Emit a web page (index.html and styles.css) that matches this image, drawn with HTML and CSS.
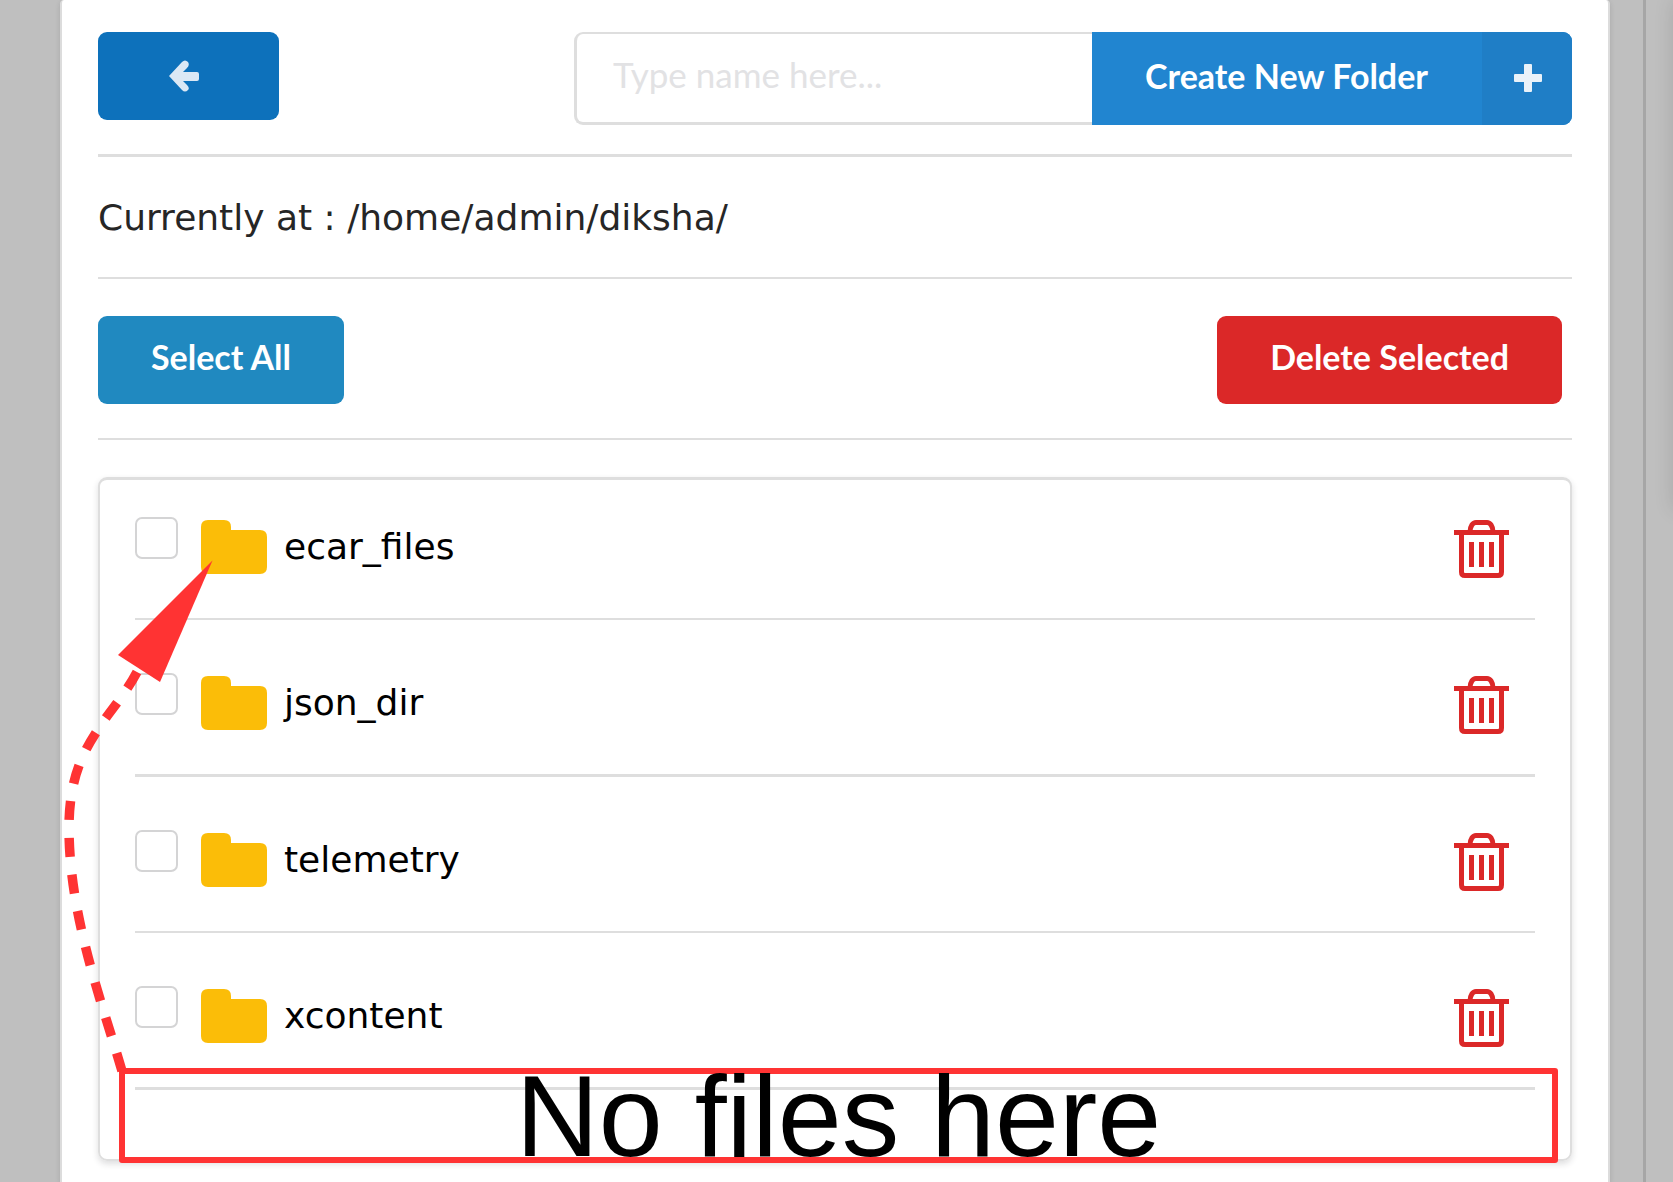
FILE: index.html
```
<!DOCTYPE html>
<html lang="en">
<head>
<meta charset="utf-8">
<title>File manager</title>
<link rel="stylesheet" href="styles.css">
</head>
<body>
<svg class="sprites" aria-hidden="true">
  <symbol id="folder" viewBox="0 0 67 61">
    <path fill="#fbbd08" d="M1 10Q1 3 8 3H24Q31 3 31 10V13H60Q67 13 67 20V50Q67 57 60 57H8Q1 57 1 50Z"/>
  </symbol>
  <symbol id="trash" viewBox="0 0 58 61">
    <g fill="none" stroke="#db2828" stroke-width="5">
      <path d="M19 15C19 9 22 5.500 25 5.500H36C39 5.500 42 9 42 15"/>
      <path d="M3 15.500H58"/>
      <path d="M10.500 16V55Q10.500 58.500 14 58.500H47Q50.500 58.500 50.500 55V16"/>
      <path d="M20.500 25V50M30.500 25V50M40.500 25V50"/>
    </g>
  </symbol>
</svg>
<div class="page">
  <main class="panel">
    <header class="toolbar">
      <button class="btn btn-back" type="button" aria-label="Back">
        <svg class="icon-arrow" viewBox="0 0 30 32"><path fill="#dbe8f5" d="M0 16L13 2Q16 -1 19 2Q21 5 18 8L14 12H28Q30 12 30 14V19Q30 21 28 21H14L18 25Q21 28 19 30Q16 33 13 30Z"/></svg>
      </button>
      <form class="create">
        <input class="create-name" type="text" placeholder="Type name here..." aria-label="Folder name">
        <button class="create-btn" type="button">
          <span class="create-label">Create New Folder</span>
          <span class="create-plus"><svg class="icon-plus" viewBox="0 0 28 28"><path fill="#e9f2f9" d="M10 1Q10 0 11 0H17Q18 0 18 1V10H27Q28 10 28 11V17Q28 18 27 18H18V27Q18 28 17 28H11Q10 28 10 27V18H1Q0 18 0 17V11Q0 10 1 10H10Z"/></svg></span>
        </button>
      </form>
    </header>
    <p class="location">Currently at : /home/admin/diksha/</p>
    <div class="actions">
      <button class="btn btn-select" type="button">Select All</button>
      <button class="btn btn-delete" type="button">Delete Selected</button>
    </div>
    <section class="card">
      <ul class="files">
        <li class="file">
          <input class="check" type="checkbox" id="f1">
          <svg class="icon-folder"><use href="#folder"/></svg>
          <label class="file-name" for="f1">ecar_files</label>
          <button class="trash" type="button" aria-label="Delete ecar_files"><svg class="icon-trash"><use href="#trash"/></svg></button>
        </li>
        <li class="file">
          <input class="check" type="checkbox" id="f2">
          <svg class="icon-folder"><use href="#folder"/></svg>
          <label class="file-name" for="f2">json_dir</label>
          <button class="trash" type="button" aria-label="Delete json_dir"><svg class="icon-trash"><use href="#trash"/></svg></button>
        </li>
        <li class="file">
          <input class="check" type="checkbox" id="f3">
          <svg class="icon-folder"><use href="#folder"/></svg>
          <label class="file-name" for="f3">telemetry</label>
          <button class="trash" type="button" aria-label="Delete telemetry"><svg class="icon-trash"><use href="#trash"/></svg></button>
        </li>
        <li class="file">
          <input class="check" type="checkbox" id="f4">
          <svg class="icon-folder"><use href="#folder"/></svg>
          <label class="file-name" for="f4">xcontent</label>
          <button class="trash" type="button" aria-label="Delete xcontent"><svg class="icon-trash"><use href="#trash"/></svg></button>
        </li>
      </ul>
      <div class="note">No files here</div>
      <svg class="pointer" viewBox="60 550 160 530" aria-hidden="true">
        <path d="M122 1071C104 1008 69 918 69 828C69 780 82 754 97 731C110 710 124 697 138 670" fill="none" stroke="#f33" stroke-width="9.500" stroke-dasharray="19 17.800"/>
        <path d="M212.500 560.500L118 655L160 682Z" fill="#f33"/>
      </svg>
    </section>
  </main>
</div>
<div class="gutter"></div>
</body>
</html>
```
FILE: styles.css
```
* {
  box-sizing: border-box;
}

body {
  margin: 0;
  min-height: 100vh;
  display: flex;
  background: #bfbfbf;
  color: #262626;
  font-family: "DejaVu Sans", sans-serif;
  font-size: 36px;
}

button,
input {
  margin: 0;
  border: 0;
  font-family: Lato, sans-serif;
  font-size: 34px;
}

.sprites {
  position: absolute;
  width: 0;
  height: 0;
}

.page {
  flex: 1;
  display: flex;
  padding: 0 33px 0 60px;
  border-right: 3px solid #a6a6a6;
}

.panel {
  flex: 1;
  min-width: 0;
  padding: 32px 36px 20px;
  background: #fff;
  border: solid #dcdcdc;
  border-width: 0 2px;
  border-radius: 4px 4px 0 0;
  box-shadow: 0 2px 5px rgba(34, 36, 38, 0.15);
}

.gutter {
  position: relative;
  width: 27px;
  overflow: hidden;
}

.gutter::before {
  content: "";
  position: absolute;
  left: 100%;
  top: 0;
  width: 40px;
  height: 510px;
  box-shadow: 0 0 20px rgba(0, 0, 0, 0.12);
}

.toolbar {
  display: flex;
  justify-content: space-between;
  align-items: flex-start;
  padding-bottom: 29px;
  border-bottom: 3px solid #dedede;
}

.btn {
  display: flex;
  align-items: center;
  justify-content: center;
  height: 88px;
  padding: 0 53px 8px;
  border-radius: 9px;
  color: #fff;
  font-weight: 700;
}

.btn-back {
  width: 181px;
  padding: 0 10px 0 0;
  background: #0d71bb;
}

.icon-arrow {
  width: 30px;
  height: 32px;
}

.create {
  display: flex;
  flex: 0 1 998px;
  height: 93px;
}

.create-name {
  flex: 1;
  min-width: 0;
  padding: 0 36px 8px;
  border: solid #dedede;
  border-width: 2px 0 3px 3px;
  border-radius: 9px 0 0 9px;
  background: #fff;
  font-size: 35px;
}

.create-name::placeholder {
  color: #e2e2e4;
  opacity: 1;
}

.create-btn {
  display: flex;
  padding: 0;
  overflow: hidden;
  border-radius: 0 9px 9px 0;
  background: #2185d0;
  color: #fff;
  font-weight: 700;
}

.create-label,
.create-plus {
  display: flex;
  align-items: center;
  justify-content: center;
  height: 100%;
}

.create-label {
  padding: 0 54px 6px 53px;
}

.create-plus {
  width: 90px;
  padding: 0 0 2px 2px;
  background: #1f7ec6;
}

.icon-plus {
  width: 28px;
  height: 28px;
}

.location {
  margin: 0;
  padding: 37px 0 35px;
  line-height: 48px;
  border-bottom: 2px solid #dedede;
}

.actions {
  display: flex;
  justify-content: space-between;
  margin-bottom: 37px;
  padding: 37px 10px 34px 0;
  border-bottom: 2px solid #dedede;
}

.btn-select {
  background: #2089c0;
}

.btn-delete {
  background: #db2828;
}

.card {
  position: relative;
  padding: 1px 35px 69px;
  border: 2px solid #dedede;
  border-top-width: 3px;
  border-radius: 9px;
  box-shadow: 0 3px 6px rgba(34, 36, 38, 0.15);
}

.files {
  margin: 0;
  padding: 0;
  list-style: none;
}

.file {
  display: flex;
  align-items: flex-start;
  padding: 53px 26px 40px 0;
  border-bottom: 2px solid #dedede;
}

.file:first-child {
  padding-top: 36px;
}

.file:nth-child(even) {
  border-bottom-width: 3px;
}

.check {
  appearance: none;
  width: 43px;
  height: 42px;
  margin-right: 22px;
  border: 2px solid #d4d4d5;
  border-radius: 7px;
  background: #fff;
}

.icon-folder {
  width: 67px;
  height: 61px;
  margin-right: 17px;
}

.file-name {
  flex: 1;
  color: #000;
  line-height: 60px;
}

.trash {
  padding: 0;
  background: none;
}

.icon-trash {
  display: block;
  width: 58px;
  height: 61px;
}

/* Annotation drawn over the list */
.note {
  position: absolute;
  left: 19px;
  right: 12px;
  bottom: -4px;
  height: 95px;
  display: flex;
  align-items: center;
  justify-content: center;
  border: 6px solid #f33;
  border-radius: 3px;
  color: #000;
  font-family: "Liberation Sans", sans-serif;
  font-size: 115px;
  line-height: 82px;
  white-space: nowrap;
}

.pointer {
  position: absolute;
  left: -40px;
  top: 70px;
  width: 160px;
  height: 530px;
}
```
